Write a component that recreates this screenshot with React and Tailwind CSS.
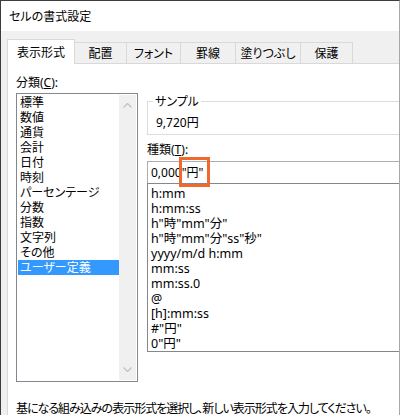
import React from "react";

const categories = [
  "標準",
  "数値",
  "通貨",
  "会計",
  "日付",
  "時刻",
  "パーセンテージ",
  "分数",
  "指数",
  "文字列",
  "その他",
  "ユーザー定義",
];

const formats = [
  "h:mm",
  "h:mm:ss",
  'h"時"mm"分"',
  'h"時"mm"分"ss"秒"',
  "yyyy/m/d h:mm",
  "mm:ss",
  "mm:ss.0",
  "@",
  "[h]:mm:ss",
  '#"円"',
  '0"円"',
];

const tabs = [
  { label: "配置", w: "w-[52px]" },
  { label: "フォント", w: "w-[54px]" },
  { label: "罫線", w: "w-[55px]" },
  { label: "塗りつぶし", w: "w-[65px]" },
  { label: "保護", w: "w-[52px]" },
];

const Chevron = ({ down }) => (
  <svg width="9" height="5" viewBox="0 0 9 5" className="block">
    <path
      d={down ? "M0.5 0.5 L4.5 4.5 L8.5 0.5" : "M0.5 4.5 L4.5 0.5 L8.5 4.5"}
      fill="none"
      stroke="#c2c2c2"
      strokeWidth="1.3"
    />
  </svg>
);

export default function App() {
  return (
    <div className="w-[400px] h-[415px] overflow-hidden bg-[#f0f0f0] border-l border-t border-l-[#3c3c3c] border-t-[#3c3c3c] border-r border-r-[#a8a8a8] flex flex-col text-black text-[12px] leading-[15px] font-['Noto_Sans','Noto_Sans_CJK_JP',sans-serif] [font-feature-settings:'palt']">
      {/* Title bar */}
      <div className="h-[30px] shrink-0 bg-white flex items-center pl-[8px] text-[12px]">
        セルの書式設定
      </div>

      {/* Dialog body */}
      <div className="flex-1 flex flex-col pl-[6px] pt-[8px]">
        {/* Tabs */}
        <div className="flex items-end h-[24px]">
          <div className="relative z-10 w-[68px] h-[25px] -mb-[1px] bg-white border-l border-t border-r border-[#d9d9d9] flex items-center justify-center">
            表示形式
          </div>
          {tabs.map((t) => (
            <div
              key={t.label}
              className={`${t.w} h-[21px] border-t border-r border-[#d9d9d9] flex items-center justify-center`}
            >
              {t.label}
            </div>
          ))}
        </div>

        {/* Panel */}
        <div className="flex-1 bg-white border-l border-t border-[#d9d9d9] pl-[8px] pt-[11px]">
          <div className="flex gap-[9px]">
            {/* Category column */}
            <div className="w-[122px] shrink-0 flex flex-col">
              <div>
                分類(<span className="underline">C</span>):
              </div>
              <div className="mt-[3px] h-[289px] border border-[#828790] p-[1px] flex">
                <div className="flex-1 flex flex-col">
                  {categories.map((c) => (
                    <div
                      key={c}
                      className={`pl-[2px] ${
                        c === "ユーザー定義" ? "bg-[#3399ff] text-white" : ""
                      }`}
                    >
                      {c}
                    </div>
                  ))}
                </div>
                <div className="w-[17px] bg-[#f0f0f0] flex flex-col items-center justify-between pt-[8px] pb-[8px]">
                  <Chevron />
                  <Chevron down />
                </div>
              </div>
            </div>

            {/* Format column */}
            <div className="w-[262px] shrink-0 flex flex-col pt-[19px]">
              <fieldset className="border border-[#dcdcdc] pl-[8px] pb-[4px]">
                <legend className="ml-[-3px] px-[2px]">サンプル</legend>
                <div className="mt-[6px]">9,720円</div>
              </fieldset>

              <div className="mt-[7px]">
                種類(<span className="underline">T</span>):
              </div>

              <div className="relative mt-[4px] h-[22px] border-l border-t border-r border-[#abadb3] flex items-center pl-[3px]">
                0,000"円"
                <div className="absolute left-[31px] top-[-5px] w-[31px] h-[30px] border-[3px] border-[#f0682c]" />
              </div>

              <div className="h-[169px] border border-[#828790] pt-[2px] pl-[3px] overflow-hidden text-[12.5px]">
                {formats.map((f) => (
                  <div key={f}>{f}</div>
                ))}
              </div>
            </div>
          </div>

          <div className="mt-[19px] whitespace-nowrap tracking-[-1px]">
            基になる組み込みの表示形式を選択し、新しい表示形式を入力してください。
          </div>
        </div>
      </div>
    </div>
  );
}
